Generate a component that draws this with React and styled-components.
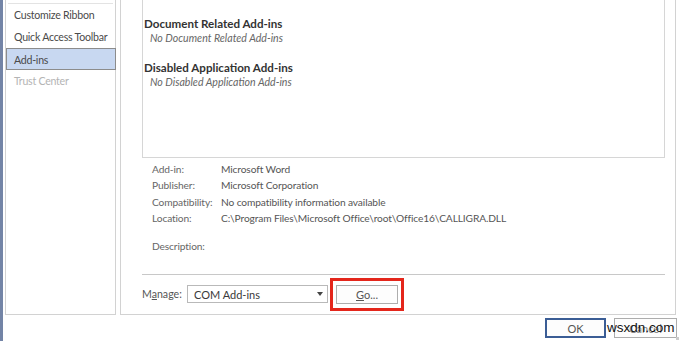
import React from "react";
import styled, { createGlobalStyle } from "styled-components";

const Global = createGlobalStyle`
  html, body { margin: 0; padding: 0; background: #fff; }
  body { font-family: Lato, "Open Sans", "DejaVu Sans", sans-serif; font-size: 11px; color: #444; }
  * { box-sizing: border-box; }
`;

const Frame = styled.div`
  width: 680px;
  height: 341px;
  display: flex;
  overflow: hidden;
  background: #fff;
  position: relative;
`;

const Strip = styled.div`
  width: 3px;
  flex: none;
  background: #7384a6;
`;

const Content = styled.div`
  flex: 1;
  display: flex;
  flex-direction: column;
`;

const TopRow = styled.div`
  display: flex;
  height: 315px;
  padding-left: 2px;
  padding-right: 4px;
  gap: 4px;
`;

const Sidebar = styled.div`
  width: 111px;
  border: 1px solid #d2d2d2;
  border-top: none;
  padding-top: 3px;
  display: flex;
  flex-direction: column;
`;

const SideSep = styled.div`
  height: 1px;
  background: #e3e3e3;
  margin: 0 2px 0 2px;
`;

const SideItem = styled.div`
  height: 22px;
  line-height: 22px;
  padding-left: ${p => (p.$active ? "7px" : "8px")};
  font-size: 10.6px;
  letter-spacing: -0.25px;
  color: ${p => (p.$disabled ? "#b4b4b4" : "#4a4a4a")};
  background: ${p => (p.$active ? "#c8d8f1" : "transparent")};
  border: ${p => (p.$active ? "1px solid #8c8c8c" : "none")};
  margin: ${p => (p.$active ? "0 -1px 0 0" : "0")};
  white-space: nowrap;
`;

const Main = styled.div`
  flex: 1;
  border: 1px solid #d2d2d2;
  border-top: none;
  display: flex;
  flex-direction: column;
  padding: 0 10px 0 21px;
`;

const ListBox = styled.div`
  height: 158px;
  border: 1px solid #d6d6d6;
  border-top: none;
  padding: 16px 0 0 0;
  display: flex;
  flex-direction: column;
`;

const GroupTitle = styled.div`
  font-weight: 700;
  font-size: 11.6px;
  color: #333;
  line-height: 15px;
  padding-left: 1px;
`;

const GroupEmpty = styled.div`
  font-style: italic;
  color: #666;
  font-size: 10.6px;
  line-height: 15px;
  padding-left: 7px;
  margin-bottom: 14px;
`;

const Details = styled.div`
  display: grid;
  grid-template-columns: 69px 1fr;
  grid-template-rows: repeat(4, 16.3px) 12px 16.3px;
  align-items: center;
  padding: 3px 0 0 10px;
  font-size: 10.2px;
  letter-spacing: -0.12px;
  color: #555;
`;

const Label = styled.div`
  color: #666;
  white-space: nowrap;
`;

const Value = styled.div`
  color: #555;
  white-space: nowrap;
`;

const Spacer = styled.div`
  grid-column: 1 / span 2;
`;

const Sep = styled.div`
  height: 1px;
  background: #c8c8c8;
  margin-top: 20px;
`;

const ManageRow = styled.div`
  display: flex;
  align-items: center;
  margin-top: 9px;
  height: 20px;
`;

const ManageLabel = styled.span`
  color: #555;
  font-size: 10.6px;
  width: 45px;
`;

const Select = styled.div`
  width: 141px;
  height: 18px;
  border: 1px solid #b9b9b9;
  background: #fff;
  display: flex;
  align-items: center;
  justify-content: space-between;
  padding: 0 4px 0 6px;
  font-size: 11px;
  color: #3a3a3a;
`;

const Caret = styled.span`
  width: 0;
  height: 0;
  border-left: 3px solid transparent;
  border-right: 3px solid transparent;
  border-top: 4px solid #444;
`;

const Highlight = styled.div`
  margin-left: 2px;
  padding: 4px 3px;
  border: 3px solid #e4261b;
`;

const Button = styled.div`
  width: ${p => p.$w || "62px"};
  height: ${p => p.$h || "19px"};
  border: ${p => (p.$primary ? "2px solid #3b5d95" : "1px solid #adadad")};
  background: #fdfdfd;
  display: flex;
  align-items: center;
  justify-content: center;
  font-size: 11px;
  color: #555;
  position: relative;
`;

const BottomRow = styled.div`
  display: flex;
  justify-content: flex-end;
  gap: 8px;
  padding: 3px 3px 0 0;
`;

const Watermark = styled.span`
  position: absolute;
  left: -8px;
  top: 1px;
  font-family: "Liberation Sans", Arial, sans-serif;
  font-size: 13.5px;
  color: #111;
  white-space: nowrap;
`;

const CancelText = styled.span`
  color: #888;
  font-size: 11px;
`;

const Grip = styled.span`
  position: absolute;
  right: -3px;
  bottom: -3px;
  width: 3px;
  height: 3px;
  background: #ccc;
`;

export default function App() {
  return (
    <>
      <Global />
      <Frame>
        <Strip />
        <Content>
          <TopRow>
            <Sidebar>
              <SideSep />
              <SideItem>Customize Ribbon</SideItem>
              <SideItem>Quick Access Toolbar</SideItem>
              <SideItem $active>Add-ins</SideItem>
              <SideItem $disabled>Trust Center</SideItem>
            </Sidebar>
            <Main>
              <ListBox>
                <GroupTitle>Document Related Add-ins</GroupTitle>
                <GroupEmpty>No Document Related Add-ins</GroupEmpty>
                <GroupTitle>Disabled Application Add-ins</GroupTitle>
                <GroupEmpty>No Disabled Application Add-ins</GroupEmpty>
              </ListBox>
              <Details>
                <Label>Add-in:</Label>
                <Value>Microsoft Word</Value>
                <Label>Publisher:</Label>
                <Value>Microsoft Corporation</Value>
                <Label>Compatibility:</Label>
                <Value>No compatibility information available</Value>
                <Label>Location:</Label>
                <Value>C:\Program Files\Microsoft Office\root\Office16\CALLIGRA.DLL</Value>
                <Spacer />
                <Label>Description:</Label>
                <Value />
              </Details>
              <Sep />
              <ManageRow>
                <ManageLabel>M<u>a</u>nage:</ManageLabel>
                <Select>
                  <span>COM Add-ins</span>
                  <Caret />
                </Select>
                <Highlight>
                  <Button $w="62px" $h="19px">
                    <span><u>G</u>o...</span>
                  </Button>
                </Highlight>
              </ManageRow>
            </Main>
          </TopRow>
          <BottomRow>
            <Button $primary $w="61px" $h="20px">OK</Button>
            <Button $w="63px" $h="20px">
              <CancelText>Cancel</CancelText>
              <Watermark>wsxdn.com</Watermark>
              <Grip />
            </Button>
          </BottomRow>
        </Content>
      </Frame>
    </>
  );
}
